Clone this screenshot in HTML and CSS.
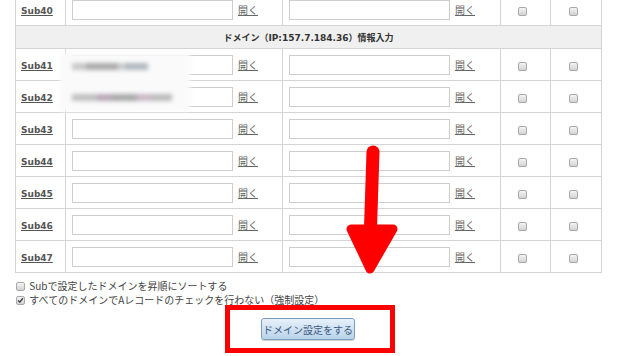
FILE: index.html
```html
<!DOCTYPE html>
<html>
    <head>
        <meta http-equiv="content-type" content="text/html; charset=utf-8" />
        <title>ドメイン設定</title>
        <link rel="stylesheet" href="styles.css">
    </head>
    <body>
        <div class="wrap">
            <table class="domains">
                <colgroup>
                    <col class="c-name">
                    <col class="c-host1">
                    <col class="c-host2">
                    <col class="c-chk1">
                    <col class="c-chk2">
                </colgroup>
                <tr>
                    <td class="name"><a href="#">Sub40</a></td>
                    <td class="host"><input type="text" class="f-text"><a href="#" class="open">開く</a></td>
                    <td class="host"><input type="text" class="f-text"><a href="#" class="open">開く</a></td>
                    <td class="chk"><input type="checkbox" class="cb"></td>
                    <td class="chk"><input type="checkbox" class="cb"></td>
                </tr>
                <tr class="head">
                    <th colspan="5">ドメイン（IP:157.7.184.36）情報入力</th>
                </tr>
                <tr>
                    <td class="name"><a href="#">Sub41</a></td>
                    <td class="host"><input type="text" class="f-text"><a href="#" class="open">開く</a></td>
                    <td class="host"><input type="text" class="f-text"><a href="#" class="open">開く</a></td>
                    <td class="chk"><input type="checkbox" class="cb"></td>
                    <td class="chk"><input type="checkbox" class="cb"></td>
                </tr>
                <tr>
                    <td class="name"><a href="#">Sub42</a></td>
                    <td class="host"><input type="text" class="f-text"><a href="#" class="open">開く</a></td>
                    <td class="host"><input type="text" class="f-text"><a href="#" class="open">開く</a></td>
                    <td class="chk"><input type="checkbox" class="cb"></td>
                    <td class="chk"><input type="checkbox" class="cb"></td>
                </tr>
                <tr>
                    <td class="name"><a href="#">Sub43</a></td>
                    <td class="host"><input type="text" class="f-text"><a href="#" class="open">開く</a></td>
                    <td class="host"><input type="text" class="f-text"><a href="#" class="open">開く</a></td>
                    <td class="chk"><input type="checkbox" class="cb"></td>
                    <td class="chk"><input type="checkbox" class="cb"></td>
                </tr>
                <tr>
                    <td class="name"><a href="#">Sub44</a></td>
                    <td class="host"><input type="text" class="f-text"><a href="#" class="open">開く</a></td>
                    <td class="host"><input type="text" class="f-text"><a href="#" class="open">開く</a></td>
                    <td class="chk"><input type="checkbox" class="cb"></td>
                    <td class="chk"><input type="checkbox" class="cb"></td>
                </tr>
                <tr>
                    <td class="name"><a href="#">Sub45</a></td>
                    <td class="host"><input type="text" class="f-text"><a href="#" class="open">開く</a></td>
                    <td class="host"><input type="text" class="f-text"><a href="#" class="open">開く</a></td>
                    <td class="chk"><input type="checkbox" class="cb"></td>
                    <td class="chk"><input type="checkbox" class="cb"></td>
                </tr>
                <tr>
                    <td class="name"><a href="#">Sub46</a></td>
                    <td class="host"><input type="text" class="f-text"><a href="#" class="open">開く</a></td>
                    <td class="host"><input type="text" class="f-text"><a href="#" class="open">開く</a></td>
                    <td class="chk"><input type="checkbox" class="cb"></td>
                    <td class="chk"><input type="checkbox" class="cb"></td>
                </tr>
                <tr>
                    <td class="name"><a href="#">Sub47</a></td>
                    <td class="host"><input type="text" class="f-text"><a href="#" class="open">開く</a></td>
                    <td class="host"><input type="text" class="f-text"><a href="#" class="open">開く</a></td>
                    <td class="chk"><input type="checkbox" class="cb"></td>
                    <td class="chk"><input type="checkbox" class="cb"></td>
                </tr>
            </table>

            <!-- ぼかし（Sub41 / Sub42 の入力値） -->
            <div class="blur">
                <span class="bar bar-1"></span>
                <span class="bar bar-2"></span>
            </div>

            <div class="opts">
                <label class="opt"><input type="checkbox" class="cb"> Subで設定したドメインを昇順にソートする</label>
                <label class="opt"><input type="checkbox" class="cb" checked> すべてのドメインでAレコードのチェックを行わない（強制設定）</label>
            </div>
            <div class="submit">
                <button type="button" class="btn">ドメイン設定をする</button>
            </div>

            <div class="mark-box"></div>
            <svg class="mark-arrow" width="70" height="140" viewBox="0 0 70 140">
                <path d="M38 9 L35 100" stroke="#ff0000" stroke-width="13" stroke-linecap="round" fill="none"/>
                <path d="M16 86 L58 86 L35 126 Z" fill="#ff0000" stroke="#ff0000" stroke-width="9" stroke-linejoin="round"/>
            </svg>
        </div>
    </body>
</html>
```

FILE: styles.css
```css
*{
    box-sizing: border-box;
    padding: 0;
    margin: 0;
}
body{
    background: #fff;
    color: #333;
    font-family: "Noto Sans CJK JP", "DejaVu Sans", sans-serif;
    font-size: 10px;
    width: 635px;
    height: 356px;
    overflow: hidden;
}
.wrap{
    position: relative;
    margin-top: -7px;
    padding-left: 15px;
}
.domains{
    border-collapse: collapse;
    width: 586px;
    table-layout: fixed;
}
.c-name{ width: 50px; }
.c-host1{ width: 217px; }
.c-host2{ width: 218px; }
.c-chk1{ width: 50px; }
.c-chk2{ width: 51px; }
.domains td,
.domains th{
    border: 1px solid #d4d4d4;
    height: 32px;
    vertical-align: middle;
}
.domains .head th{
    height: 23px;
    background: #f0f0f0;
    font-family: "DejaVu Sans", "Noto Sans CJK JP", sans-serif;
    font-size: 9px;
    font-weight: bold;
    color: #333;
    text-align: center;
}
.name{
    padding-left: 5px;
}
.name a{
    font-family: "DejaVu Sans", sans-serif;
    font-weight: bold;
    font-size: 9px;
    color: #555;
}
.host{
    padding-left: 6px;
    white-space: nowrap;
}
.f-text{
    width: 161px;
    height: 20px;
    border: 1px solid #cdcdcd;
    background: #fff;
    vertical-align: middle;
    outline: 0;
}
.open{
    display: inline-block;
    margin-left: 5px;
    font-size: 10px;
    color: #666;
    vertical-align: middle;
}
.chk{
    text-align: center;
}
.chk .cb{
    margin-right: 6px;
}
.cb{
    appearance: none;
    -webkit-appearance: none;
    width: 9px;
    height: 9px;
    border: 1px solid #a9a9a9;
    border-radius: 2px;
    background: linear-gradient(#f4f4f4, #d2d2d2);
    vertical-align: middle;
}
.cb:checked{
    background: url("data:image/svg+xml,%3Csvg xmlns='http://www.w3.org/2000/svg' viewBox='0 0 9 9'%3E%3Cpath d='M1.5 4.5 L3.6 6.6 L7.6 1.6' stroke='%23333' stroke-width='1.6' fill='none'/%3E%3C/svg%3E"), linear-gradient(#f4f4f4, #d2d2d2);
}
.blur{
    position: absolute;
    left: 60px;
    top: 60px;
    width: 130px;
    height: 58px;
    background: #fafafa;
    filter: blur(2px);
}
.bar{
    position: absolute;
    left: 12px;
    height: 7px;
    background: #b8b8b8;
}
.bar-1{
    top: 10px;
    width: 76px;
    background: linear-gradient(90deg, #c8c8c8 0 18%, #aaa 18% 60%, #ccc 60% 70%, #b0b8c0 70%);
}
.bar-2{
    top: 41px;
    width: 100px;
    background: linear-gradient(90deg, #c0c0c0 0 25%, #b8a8b8 25% 40%, #a8a8a8 40% 65%, #c8b8c8 65% 78%, #bbb 78%);
}
.opts{
    padding-top: 6px;
    padding-left: 1px;
}
.opt{
    display: block;
    line-height: 14px;
    font-size: 10px;
    color: #444;
}
.opt .cb{
    margin-right: 2px;
    vertical-align: -1px;
}
.submit{
    width: 586px;
    text-align: center;
    padding-top: 11px;
}
.btn{
    font-family: "Noto Sans CJK JP", sans-serif;
    font-size: 10px;
    color: #3c5a7c;
    width: 94px;
    height: 22px;
    border: 1px solid #7b9ebf;
    border-radius: 3px;
    background: linear-gradient(#e7f1fa, #b9d3ea);
    box-shadow: 0 1px 1px rgba(0,0,0,0.2);
}
.mark-box{
    position: absolute;
    left: 225px;
    top: 312px;
    width: 170px;
    height: 48px;
    border: 5px solid #ff0000;
}
.mark-arrow{
    position: absolute;
    left: 335px;
    top: 150px;
}
```
